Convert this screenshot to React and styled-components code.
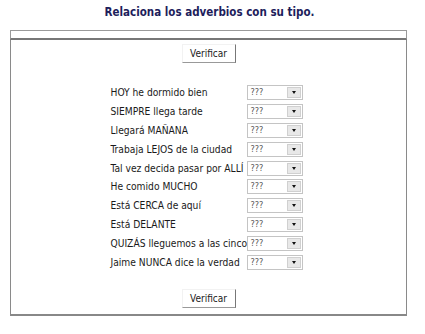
import React from 'react'
import styled, { createGlobalStyle } from 'styled-components'

const rows = [
  'HOY he dormido bien',
  'SIEMPRE llega tarde',
  'Llegará MAÑANA',
  'Trabaja LEJOS de la ciudad',
  'Tal vez decida pasar por ALLÍ',
  'He comido MUCHO',
  'Está CERCA de aquí',
  'Está DELANTE',
  'QUIZÁS lleguemos a las cinco',
  'Jaime NUNCA dice la verdad',
]

const GlobalStyle = createGlobalStyle`
  body {
    margin: 0;
    background: #fff;
    font-family: "DejaVu Sans Condensed", "Liberation Sans", sans-serif;
  }
`

const Title = styled.h1`
  margin: 0;
  padding-top: 5px;
  padding-right: 6px;
  height: 25px;
  text-align: center;
  font-size: 11.5px;
  font-weight: bold;
  color: #1e1e5c;
`

const Frame = styled.div`
  margin: 0 18px 0 10px;
`

const TopBar = styled.div`
  height: 7px;
  border: 1px solid #9a9a9a;
  border-bottom: 2px solid #777;
`

const Panel = styled.div`
  border: 1px solid #8a8a8a;
  border-top: none;
  border-bottom: 2px solid #888;
  padding: 4px 0 6px;
  display: flex;
  flex-direction: column;
  align-items: center;
`

const Button = styled.button`
  font-family: inherit;
  font-size: 10px;
  color: #222;
  background: #fff;
  border: none;
  border-right: 1px solid #777;
  border-bottom: 1px solid #999;
  border-top: 1px solid #f2f2f2;
  border-left: 1px solid #f2f2f2;
  width: 54px;
  height: 19px;
  padding: 0;
`

const Table = styled.div`
  margin: 22px 0 19px -4px;
  display: grid;
  grid-template-columns: 136px 56px;
  row-gap: 3.9px;
  align-items: center;
`

const Label = styled.span`
  font-size: 10.2px;
  color: #1a1a1a;
  white-space: nowrap;
`

const Select = styled.div`
  height: 13px;
  border: 1px solid #c4c4c4;
  display: flex;
  align-items: stretch;
  background: #fff;
`

const Value = styled.span`
  flex: 1;
  font-size: 9px;
  color: #555;
  padding-left: 3px;
  line-height: 13px;
`

const Arrow = styled.span`
  width: 12px;
  margin: 1px;
  background: #e8e8e8;
  border: 1px solid #d0d0d0;
  display: flex;
  align-items: center;
  justify-content: center;
  &::after {
    content: '';
    border-left: 2.5px solid transparent;
    border-right: 2.5px solid transparent;
    border-top: 3px solid #111;
  }
`

export default function App() {
  return (
    <>
      <GlobalStyle />
      <Title>Relaciona los adverbios con su tipo.</Title>
      <Frame>
        <TopBar />
        <Panel>
          <Button>Verificar</Button>
          <Table>
            {rows.map((r) => (
              <React.Fragment key={r}>
                <Label>{r}</Label>
                <Select>
                  <Value>???</Value>
                  <Arrow />
                </Select>
              </React.Fragment>
            ))}
          </Table>
          <Button>Verificar</Button>
        </Panel>
      </Frame>
    </>
  )
}
